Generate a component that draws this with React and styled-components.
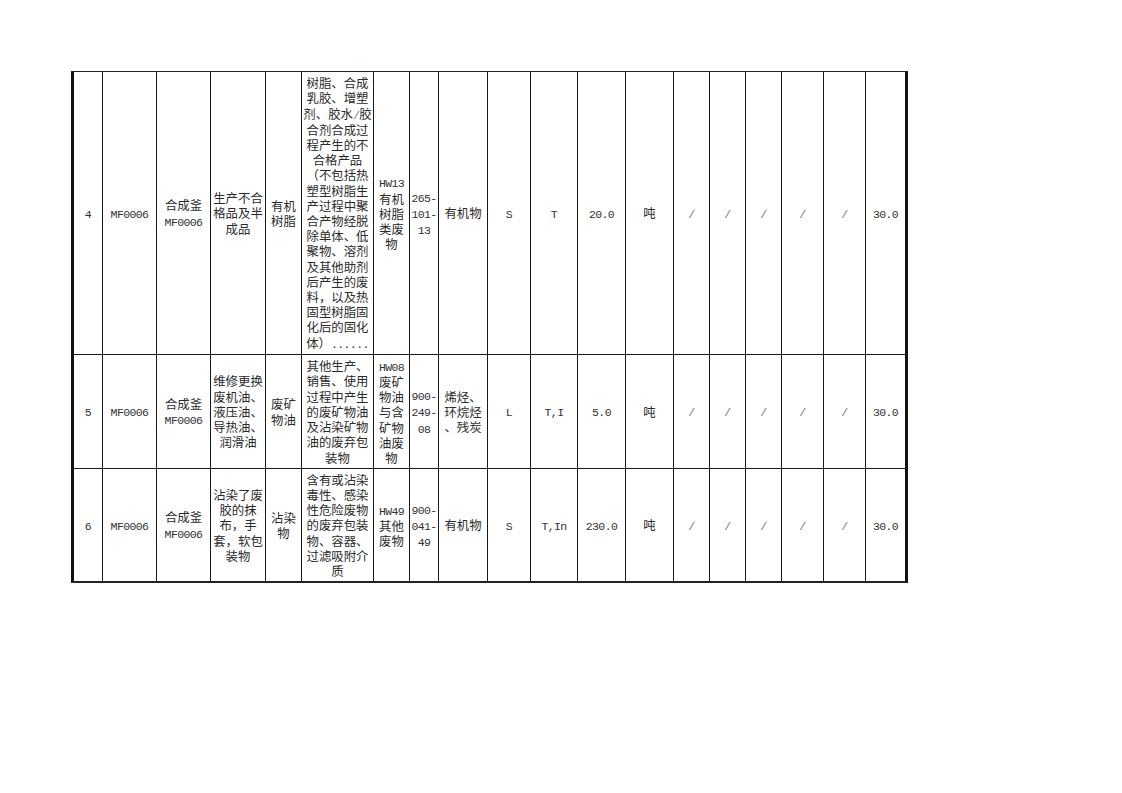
import React from "react";
import styled, { createGlobalStyle } from "styled-components";

const GlobalStyle = createGlobalStyle`
  html, body {
    margin: 0;
    padding: 0;
    background: #ffffff;
  }
  body {
    font-family: "Noto Sans CJK SC", "Liberation Serif", serif;
  }
`;

// column widths measured from the sheet, each includes its 1px left rule
const COLS = [28, 54, 54, 55, 36, 72, 36, 29, 49, 43, 47, 48, 48, 36, 36, 36, 42, 42, 40];
const ROWS = [282, 114, 113];

const Page = styled.div`
  padding: 71px 0 0 71px;
  min-height: 793px;
  box-sizing: border-box;
`;

const Sheet = styled.div`
  display: inline-grid;
  grid-template-columns: ${COLS.map((w) => `${w}px`).join(" ")};
  grid-template-rows: ${ROWS.map((h) => `${h}px`).join(" ")};
  border-left: 3px solid #111;
  border-right: 3px solid #111;
  border-top: 1px solid #222;
  border-bottom: 2px solid #222;
`;

const Row = styled.div`
  display: contents;
`;

const Cell = styled.div`
  box-sizing: border-box;
  display: flex;
  align-items: center;
  justify-content: center;
  border-left: ${(p) => (p.$first ? "none" : "1px solid #1a1a1a")};
  border-top: ${(p) => (p.$top ? "none" : "1px solid #1a1a1a")};
  overflow: hidden;
`;

const Text = styled.span`
  display: block;
  white-space: pre;
  text-align: center;
  font-size: 12.4px;
  line-height: 15.2px;
  color: #2b2b2b;
  padding-top: 2px;
`;

const Lat = styled.span`
  font-family: "Liberation Mono", monospace;
  font-size: 11.5px;
  letter-spacing: -0.6px;
  color: ${(p) => (p.$light ? "#777" : "#333")};
`;

const rows = [
  [
    "4",
    "MF0006",
    "合成釜\nMF0006",
    "生产不合\n格品及半\n成品",
    "有机\n树脂",
    "树脂、合成\n乳胶、增塑\n剂、胶水/胶\n合剂合成过\n程产生的不\n合格产品\n（不包括热\n塑型树脂生\n产过程中聚\n合产物经脱\n除单体、低\n聚物、溶剂\n及其他助剂\n后产生的废\n料，以及热\n固型树脂固\n化后的固化\n体）......",
    "HW13\n有机\n树脂\n类废\n物",
    "265-\n101-\n13",
    "有机物",
    "S",
    "T",
    "20.0",
    "吨",
    "/",
    "/",
    "/",
    "/",
    "/",
    "30.0",
  ],
  [
    "5",
    "MF0006",
    "合成釜\nMF0006",
    "维修更换\n废机油、\n液压油、\n导热油、\n润滑油",
    "废矿\n物油",
    "其他生产、\n销售、使用\n过程中产生\n的废矿物油\n及沾染矿物\n油的废弃包\n装物",
    "HW08\n废矿\n物油\n与含\n矿物\n油废\n物",
    "900-\n249-\n08",
    "烯烃、\n环烷烃\n、残炭",
    "L",
    "T,I",
    "5.0",
    "吨",
    "/",
    "/",
    "/",
    "/",
    "/",
    "30.0",
  ],
  [
    "6",
    "MF0006",
    "合成釜\nMF0006",
    "沾染了废\n胶的抹\n布，手\n套，软包\n装物",
    "沾染\n物",
    "含有或沾染\n毒性、感染\n性危险废物\n的废弃包装\n物、容器、\n过滤吸附介\n质",
    "HW49\n其他\n废物",
    "900-\n041-\n49",
    "有机物",
    "S",
    "T,In",
    "230.0",
    "吨",
    "/",
    "/",
    "/",
    "/",
    "/",
    "30.0",
  ],
];

// latin runs get the narrow monospace face, like the half-width glyphs of the sheet font
const renderText = (str) =>
  str.split(/([\x21-\x7e]+)/).map((part, i) =>
    /^[\x21-\x7e]+$/.test(part) ? (
      <Lat key={i} $light={part === "/"}>
        {part}
      </Lat>
    ) : (
      part
    )
  );

const App = () => {
  return (
    <Page>
      <GlobalStyle />
      <Sheet>
        {rows.map((row, r) => (
          <Row key={r}>
            {row.map((value, c) => (
              <Cell key={c} $first={c === 0} $top={r === 0}>
                <Text>{renderText(value)}</Text>
              </Cell>
            ))}
          </Row>
        ))}
      </Sheet>
    </Page>
  );
};

export default App;
